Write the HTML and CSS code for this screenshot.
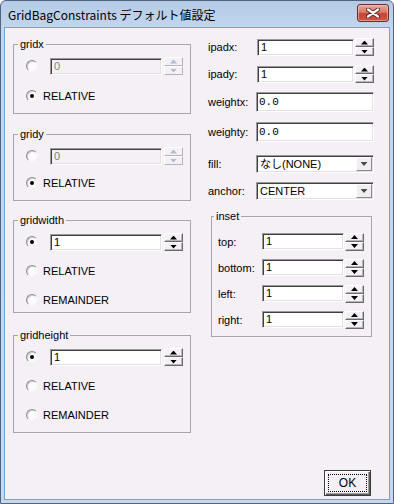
FILE: index.html
```html
<!DOCTYPE html>
<html lang="ja">
<head>
<meta charset="utf-8">
<title>GridBagConstraints デフォルト値設定</title>
<link rel="stylesheet" href="styles.css">
</head>
<body>
<div class="window">
  <div class="titlebar">
    <span class="title">GridBagConstraints デフォルト値設定</span>
    <button class="close" aria-label="閉じる">
      <svg width="14" height="10" viewBox="0 0 14 10">
        <path d="M2 1.5 L12 8.5 M12 1.5 L2 8.5" stroke="#5a2020" stroke-width="4" stroke-linecap="round"/>
        <path d="M2 1.5 L12 8.5 M12 1.5 L2 8.5" stroke="#ffffff" stroke-width="2.2" stroke-linecap="round"/>
      </svg>
    </button>
  </div>
  <div class="client">
    <div class="main">
      <div class="left">
        <fieldset class="group g-x">
          <legend>gridx</legend>
          <div class="row"><span class="radio"></span><span class="field num disabled">0</span><span class="spin disabled"><span class="sb up"></span><span class="sb dn"></span></span></div>
          <div class="row"><span class="radio checked"></span><span class="rlabel">RELATIVE</span></div>
        </fieldset>
        <fieldset class="group g-y">
          <legend>gridy</legend>
          <div class="row"><span class="radio"></span><span class="field num disabled">0</span><span class="spin disabled"><span class="sb up"></span><span class="sb dn"></span></span></div>
          <div class="row"><span class="radio checked"></span><span class="rlabel">RELATIVE</span></div>
        </fieldset>
        <fieldset class="group g-w">
          <legend>gridwidth</legend>
          <div class="row"><span class="radio checked"></span><span class="field num">1</span><span class="spin"><span class="sb up"></span><span class="sb dn"></span></span></div>
          <div class="row"><span class="radio"></span><span class="rlabel">RELATIVE</span></div>
          <div class="row"><span class="radio"></span><span class="rlabel">REMAINDER</span></div>
        </fieldset>
        <fieldset class="group g-h">
          <legend>gridheight</legend>
          <div class="row"><span class="radio checked"></span><span class="field num">1</span><span class="spin"><span class="sb up"></span><span class="sb dn"></span></span></div>
          <div class="row"><span class="radio"></span><span class="rlabel">RELATIVE</span></div>
          <div class="row"><span class="radio"></span><span class="rlabel">REMAINDER</span></div>
        </fieldset>
      </div>
      <div class="right">
        <div class="prow r-ipadx"><span class="plabel">ipadx:</span><span class="field ipad">1</span><span class="spin"><span class="sb up"></span><span class="sb dn"></span></span></div>
        <div class="prow r-ipady"><span class="plabel">ipady:</span><span class="field ipad">1</span><span class="spin"><span class="sb up"></span><span class="sb dn"></span></span></div>
        <div class="prow r-wx"><span class="plabel">weightx:</span><span class="field mono">0.0</span></div>
        <div class="prow r-wy"><span class="plabel">weighty:</span><span class="field mono">0.0</span></div>
        <div class="prow r-fill"><span class="plabel">fill:</span><span class="field combo"><span class="ctext">なし(NONE)</span><span class="cbtn"></span></span></div>
        <div class="prow r-anchor"><span class="plabel">anchor:</span><span class="field combo"><span class="ctext">CENTER</span><span class="cbtn"></span></span></div>
        <fieldset class="group inset">
          <legend>inset</legend>
          <div class="irow"><span class="ilabel">top:</span><span class="field ifield">1</span><span class="spin"><span class="sb up"></span><span class="sb dn"></span></span></div>
          <div class="irow"><span class="ilabel">bottom:</span><span class="field ifield">1</span><span class="spin"><span class="sb up"></span><span class="sb dn"></span></span></div>
          <div class="irow"><span class="ilabel">left:</span><span class="field ifield">1</span><span class="spin"><span class="sb up"></span><span class="sb dn"></span></span></div>
          <div class="irow"><span class="ilabel">right:</span><span class="field ifield">1</span><span class="spin"><span class="sb up"></span><span class="sb dn"></span></span></div>
        </fieldset>
      </div>
    </div>
    <div class="footer">
      <button class="ok"><span class="ok-focus">OK</span></button>
    </div>
  </div>
</div>
</body>
</html>
```
FILE: styles.css
```css
html, body {
  margin: 0;
  padding: 0;
  background: #ffffff;
}
body {
  font-family: "Liberation Sans", Arial, "Noto Sans CJK JP", sans-serif;
  font-size: 11px;
  color: #000;
}
.window {
  width: 394px;
  height: 504px;
  box-sizing: border-box;
  border: 1px solid #50647e;
  border-radius: 6px 6px 0 0;
  background: linear-gradient(#b3cbe7, #c2d6ed 26px, #c4d8ee);
  padding: 0 3px 3px;
  display: flex;
  flex-direction: column;
}
.titlebar {
  height: 26px;
  flex: none;
  display: flex;
  align-items: flex-start;
  justify-content: space-between;
  padding: 0 1px 0 4px;
}
.title {
  font-family: "Noto Sans CJK JP", "Liberation Sans", sans-serif;
  font-size: 12px;
  line-height: 27px;
  color: #000;
}
.close {
  margin-top: 3px;
  width: 32px;
  height: 18px;
  box-sizing: border-box;
  padding: 0;
  border: 1px solid #63302b;
  border-radius: 3px;
  background: linear-gradient(#e7aa9d, #d77a6a 45%, #c24634 55%, #cb5a44);
  box-shadow: inset 0 0 0 1px rgba(255, 220, 210, 0.45);
  display: flex;
  align-items: center;
  justify-content: center;
}
.close svg { display: block; }
.client {
  flex: 1;
  background: #f4f0f5;
  border: 1px solid #6aa6d8;
  display: flex;
  flex-direction: column;
}
.main {
  display: flex;
  align-items: flex-start;
  padding: 10px 0 0 8px;
}
.left {
  width: 178px;
  display: flex;
  flex-direction: column;
}
.group {
  margin: 0;
  min-width: 0;
  box-sizing: border-box;
  border: 1px solid #a7a7a7;
  display: flex;
  flex-direction: column;
}
.group legend {
  font-size: 11px;
  line-height: 13px;
  padding: 0 2px;
}
.left .group {
  width: 178px;
  padding: 5px 0 7px 12px;
}
.left .group legend { margin-left: -8px; }
.g-x { gap: 10px; }
.g-y { gap: 7px; margin-top: 14px; }
.g-w { gap: 9px; margin-top: 13px; padding-bottom: 2px !important; }
.g-h { gap: 9px; margin-top: 16px; }
.row {
  height: 20px;
  display: flex;
  align-items: center;
}
.radio {
  flex: none;
  width: 12px;
  height: 12px;
  box-sizing: border-box;
  border-radius: 50%;
  border: 1px solid;
  border-color: #8d8d8d #f4f4f4 #f4f4f4 #8d8d8d;
  background: #fbfbfb;
  box-shadow: inset 1px 1px 0 #cfcfcf;
  position: relative;
}
.radio.checked::after {
  content: "";
  position: absolute;
  left: 3px;
  top: 3px;
  width: 4px;
  height: 4px;
  border-radius: 50%;
  background: #000;
}
.rlabel {
  margin-left: 5px;
  line-height: 13px;
}
.field {
  flex: none;
  box-sizing: border-box;
  height: 17px;
  border: 1px solid;
  border-color: #9a9a9a #ffffff #ffffff #9a9a9a;
  box-shadow: inset 1px 1px 0 #404040, inset -1px -1px 0 #e3e0e4;
  background: #fff;
  padding: 0 3px;
  display: flex;
  align-items: center;
  line-height: 13px;
}
.field.num {
  width: 112px;
  margin-left: 12px;
}
.field.disabled {
  background: #f4f0f5;
  color: #808080;
}
.spin {
  flex: none;
  width: 19px;
  height: 18px;
  margin-left: 2px;
  display: flex;
  flex-direction: column;
}
.sb {
  flex: 1;
  box-sizing: border-box;
  border: 1px solid;
  border-color: #ffffff #6a6a6a #6a6a6a #ffffff;
  box-shadow: inset -1px -1px 0 #b8b5b9;
  background: #f4f0f5;
  display: flex;
  align-items: center;
  justify-content: center;
}
.sb::before {
  content: "";
  width: 7px;
  height: 4px;
  background: #000;
}
.sb.up::before { clip-path: polygon(50% 0, 100% 100%, 0 100%); }
.sb.dn::before { clip-path: polygon(0 0, 100% 0, 50% 100%); }
.spin.disabled .sb {
  border-color: #ffffff #b4b4b4 #b4b4b4 #ffffff;
  box-shadow: none;
}
.spin.disabled .sb::before { background: #a9bdd3; }

.right {
  margin-left: 17px;
  width: 166px;
  padding-top: 0;
  display: flex;
  flex-direction: column;
}
.prow {
  display: flex;
  align-items: center;
}
.plabel {
  width: 48px;
  flex: none;
}
.field.ipad {
  width: 97px;
  margin-left: 1px;
  height: 17px;
}
.prow .spin { margin-left: 1px; }
.r-ipady { margin-top: 9px; }
.r-wx { margin-top: 9px; }
.r-wy { margin-top: 10px; }
.r-fill { margin-top: 13px; }
.r-anchor { margin-top: 9px; }
.field.mono {
  width: 118px;
  height: 20px;
  align-items: flex-start;
  padding: 3px 2px 0;
  font-family: "Liberation Mono", "Courier New", monospace;
  font-size: 11px;
  line-height: 12px;
}
.field.combo {
  width: 118px;
  height: 18px;
  padding: 1px 1px 1px 3px;
  justify-content: space-between;
  align-items: stretch;
}
.ctext {
  align-self: center;
  font-family: "Liberation Sans", "Noto Sans CJK JP", sans-serif;
}
.cbtn {
  width: 16px;
  box-sizing: border-box;
  border: 1px solid;
  border-color: #ffffff #8a8a8a #8a8a8a #ffffff;
  background: #f1eef2;
  display: flex;
  align-items: center;
  justify-content: center;
}
.cbtn::before {
  content: "";
  width: 7px;
  height: 4px;
  background: #4a4a4a;
  clip-path: polygon(0 0, 100% 0, 50% 100%);
}
.group.inset {
  width: 161px;
  margin-left: 3px;
  margin-top: 10px;
  padding: 10px 0 8px 6px;
  gap: 9px;
}
.group.inset legend { margin-left: -4px; }
.irow {
  height: 17px;
  display: flex;
  align-items: center;
}
.ilabel {
  width: 44px;
  flex: none;
}
.field.ifield { width: 82px; }
.irow .spin { margin-left: 1px; }

.footer {
  margin-top: auto;
  display: flex;
  justify-content: flex-end;
  padding: 0 18px 3px 0;
}
.ok {
  width: 47px;
  height: 26px;
  box-sizing: border-box;
  padding: 3px;
  border: 1px solid #3c3c3c;
  background: #f4f0f5;
  box-shadow: inset 1px 1px 0 #ffffff, inset -1px -1px 0 #5a5a5a, inset -2px -2px 0 #a0a0a0;
  display: flex;
  font-family: "Liberation Sans", Arial, sans-serif;
  font-size: 12px;
  color: #000;
}
.ok-focus {
  flex: 1;
  border: 1px dotted #000;
  display: flex;
  align-items: center;
  justify-content: center;
}
```
